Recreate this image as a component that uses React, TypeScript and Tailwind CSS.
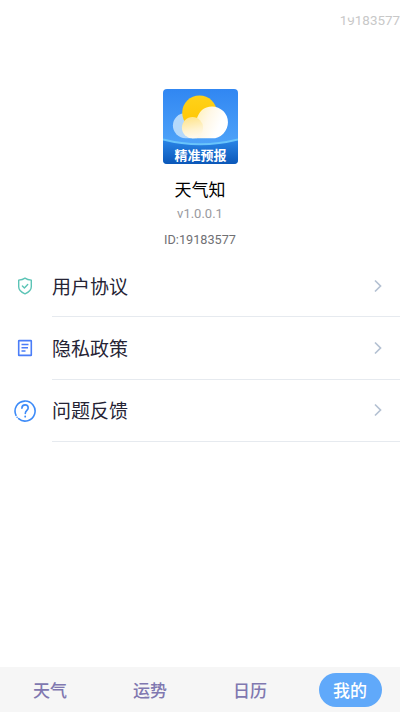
import { useState } from 'react'

const USER_ID = '19183577'

function AppLogo() {
  return (
    <svg width="75" height="75" viewBox="0 0 75 75">
      <defs>
        <linearGradient id="sky" x1="0" y1="0" x2="0" y2="1">
          <stop offset="0" stopColor="#3187f2" />
          <stop offset="1" stopColor="#58acfb" />
        </linearGradient>
        <linearGradient id="sea" x1="0" y1="0" x2="0" y2="1">
          <stop offset="0" stopColor="#2a86e8" />
          <stop offset="1" stopColor="#0b57b8" />
        </linearGradient>
        <linearGradient id="sun" x1="0" y1="0" x2="0" y2="1">
          <stop offset="0" stopColor="#ffd21a" />
          <stop offset="1" stopColor="#ffc400" />
        </linearGradient>
        <linearGradient id="cloud" x1="0" y1="0.2" x2="1" y2="0.6">
          <stop offset="0" stopColor="#ffefb0" />
          <stop offset="0.45" stopColor="#fff8e8" />
          <stop offset="0.8" stopColor="#ffffff" />
        </linearGradient>
        <linearGradient id="puff" x1="0.4" y1="0" x2="0.6" y2="1">
          <stop offset="0" stopColor="#ffe48a" />
          <stop offset="0.6" stopColor="#fff3d0" />
          <stop offset="1" stopColor="#fffaf0" />
        </linearGradient>
        <clipPath id="tile">
          <rect width="75" height="75" rx="4" />
        </clipPath>
      </defs>
      <g clipPath="url(#tile)">
        <rect width="75" height="75" fill="url(#sky)" />
        <path d="M22.5 24a12.5 12.5 0 0 0 0 25.2H34V32z" fill="#b5d9fb" />
        <circle cx="36.5" cy="23.7" r="17.3" fill="url(#sun)" />
        <path
          d="M29 49.3V37L33.5 31C35.5 22.5 41 17.4 49 17.4a15.95 15.95 0 0 1 0 31.9z"
          fill="url(#cloud)"
        />
        <circle cx="29.5" cy="38.7" r="10.6" fill="url(#puff)" />
        <path d="M0 50.5Q37 60 75 50.5V75H0z" fill="url(#sea)" />
        <path d="M0 50.5Q37 60 75 50.5" fill="none" stroke="#69c4fb" strokeWidth="2" />
      </g>
      <text
        x="37.5"
        y="70.5"
        textAnchor="middle"
        textLength="52"
        fontSize="13"
        fontWeight="700"
        fill="#fff"
        fontFamily="'Noto Sans CJK SC', sans-serif"
      >
        精准预报
      </text>
    </svg>
  )
}

function ShieldIcon() {
  return (
    <svg width="22" height="22" viewBox="0 0 22 22" fill="none" stroke="#5cc4b6" strokeWidth="1.4" strokeLinecap="round" strokeLinejoin="round">
      <path d="M11 3.1C9 4.5 7 4.9 4.7 5.1V11.8C4.7 15.5 7.5 17.4 11 18.9C14.5 17.4 17.3 15.5 17.3 11.8V5.1C15 4.9 13 4.5 11 3.1Z" />
      <path d="M8.4 10.9l2 2 3.3-3.5" />
    </svg>
  )
}

function DocumentIcon() {
  return (
    <svg width="22" height="22" viewBox="0 0 22 22" fill="none" stroke="#4a7df8" strokeWidth="1.6" strokeLinejoin="round">
      <rect x="4.7" y="3.6" width="12.6" height="14.8" rx="0.5" />
      <path d="M7.5 7.5h7M7.5 10.8h6.5M7.5 14h4" />
    </svg>
  )
}

function QuestionIcon() {
  return (
    <svg width="22" height="22" viewBox="0 0 22 22" fill="none" stroke="#3d8bf8" strokeWidth="1.6" strokeLinecap="round">
      <path d="M2 15.3A10 10 0 1 1 4.6 18.7" />
      <path d="M3.1 17.2v0.1" />
      <path d="M7.9 8.2C7.9 6 9.3 4.9 11.1 4.9C12.9 4.9 14.2 6.1 14.2 7.9C14.2 10.3 11.3 10.5 11.3 13.5" />
      <path d="M11.2 16.5v0.2" strokeWidth="1.8" />
    </svg>
  )
}

const rows = [
  { label: '用户协议', Icon: ShieldIcon },
  { label: '隐私政策', Icon: DocumentIcon },
  { label: '问题反馈', Icon: QuestionIcon },
]

const tabs = ['天气', '运势', '日历', '我的']

export default function App() {
  const [active, setActive] = useState('我的')

  return (
    <div className="flex h-screen w-full flex-col overflow-hidden bg-white font-[Roboto,'Noto_Sans_CJK_SC',sans-serif]">
      <header className="flex h-[89px] shrink-0 justify-end pt-[11px]">
        <span className="relative h-5 text-[13.4px] leading-5 text-[#c8c8c8]">
          {USER_ID}
          {/* camera cutout */}
          <i className="absolute top-[2px] left-[7px] h-[5px] w-[7px] rounded-b-full bg-white" />
        </span>
      </header>

      <section className="flex h-[166px] shrink-0 flex-col items-center">
        <AppLogo />
        <h1 className="mt-[14px] text-[17px] leading-6 text-black">天气知</h1>
        <p className="mt-0.5 text-[13px] leading-5 text-[#9a9a9e]">v1.0.0.1</p>
        <p className="mt-1.5 text-[12.7px] leading-5 text-[#707074]">ID:{USER_ID}</p>
      </section>

      <ul className="flex-1">
        {rows.map(({ label, Icon }) => (
          <li key={label} className="flex h-[62.3px] items-center pl-3.5">
            <Icon />
            <div className="ml-4 flex h-full flex-1 items-center justify-between border-b border-[#e6eaef] pr-[17px]">
              <span className="pt-1 text-[19px] leading-7 text-[#262435]">{label}</span>
              <svg width="10" height="14" viewBox="0 0 10 14" fill="none" stroke="#b4c1d2" strokeWidth="1.7">
                <path d="M2 1.5L7.5 7L2 12.5" />
              </svg>
            </div>
          </li>
        ))}
      </ul>

      <nav className="grid h-[45px] shrink-0 grid-cols-4 items-center justify-items-center bg-[#f6f6f6]">
        {tabs.map((tab) => (
          <button
            key={tab}
            onClick={() => setActive(tab)}
            className={`h-[34px] w-[63px] rounded-full pt-[5px] text-[17px] font-medium ${
              tab === active ? 'bg-[#60a9fa] text-white' : 'text-[#8078b0]'
            }`}
          >
            {tab}
          </button>
        ))}
      </nav>
    </div>
  )
}
